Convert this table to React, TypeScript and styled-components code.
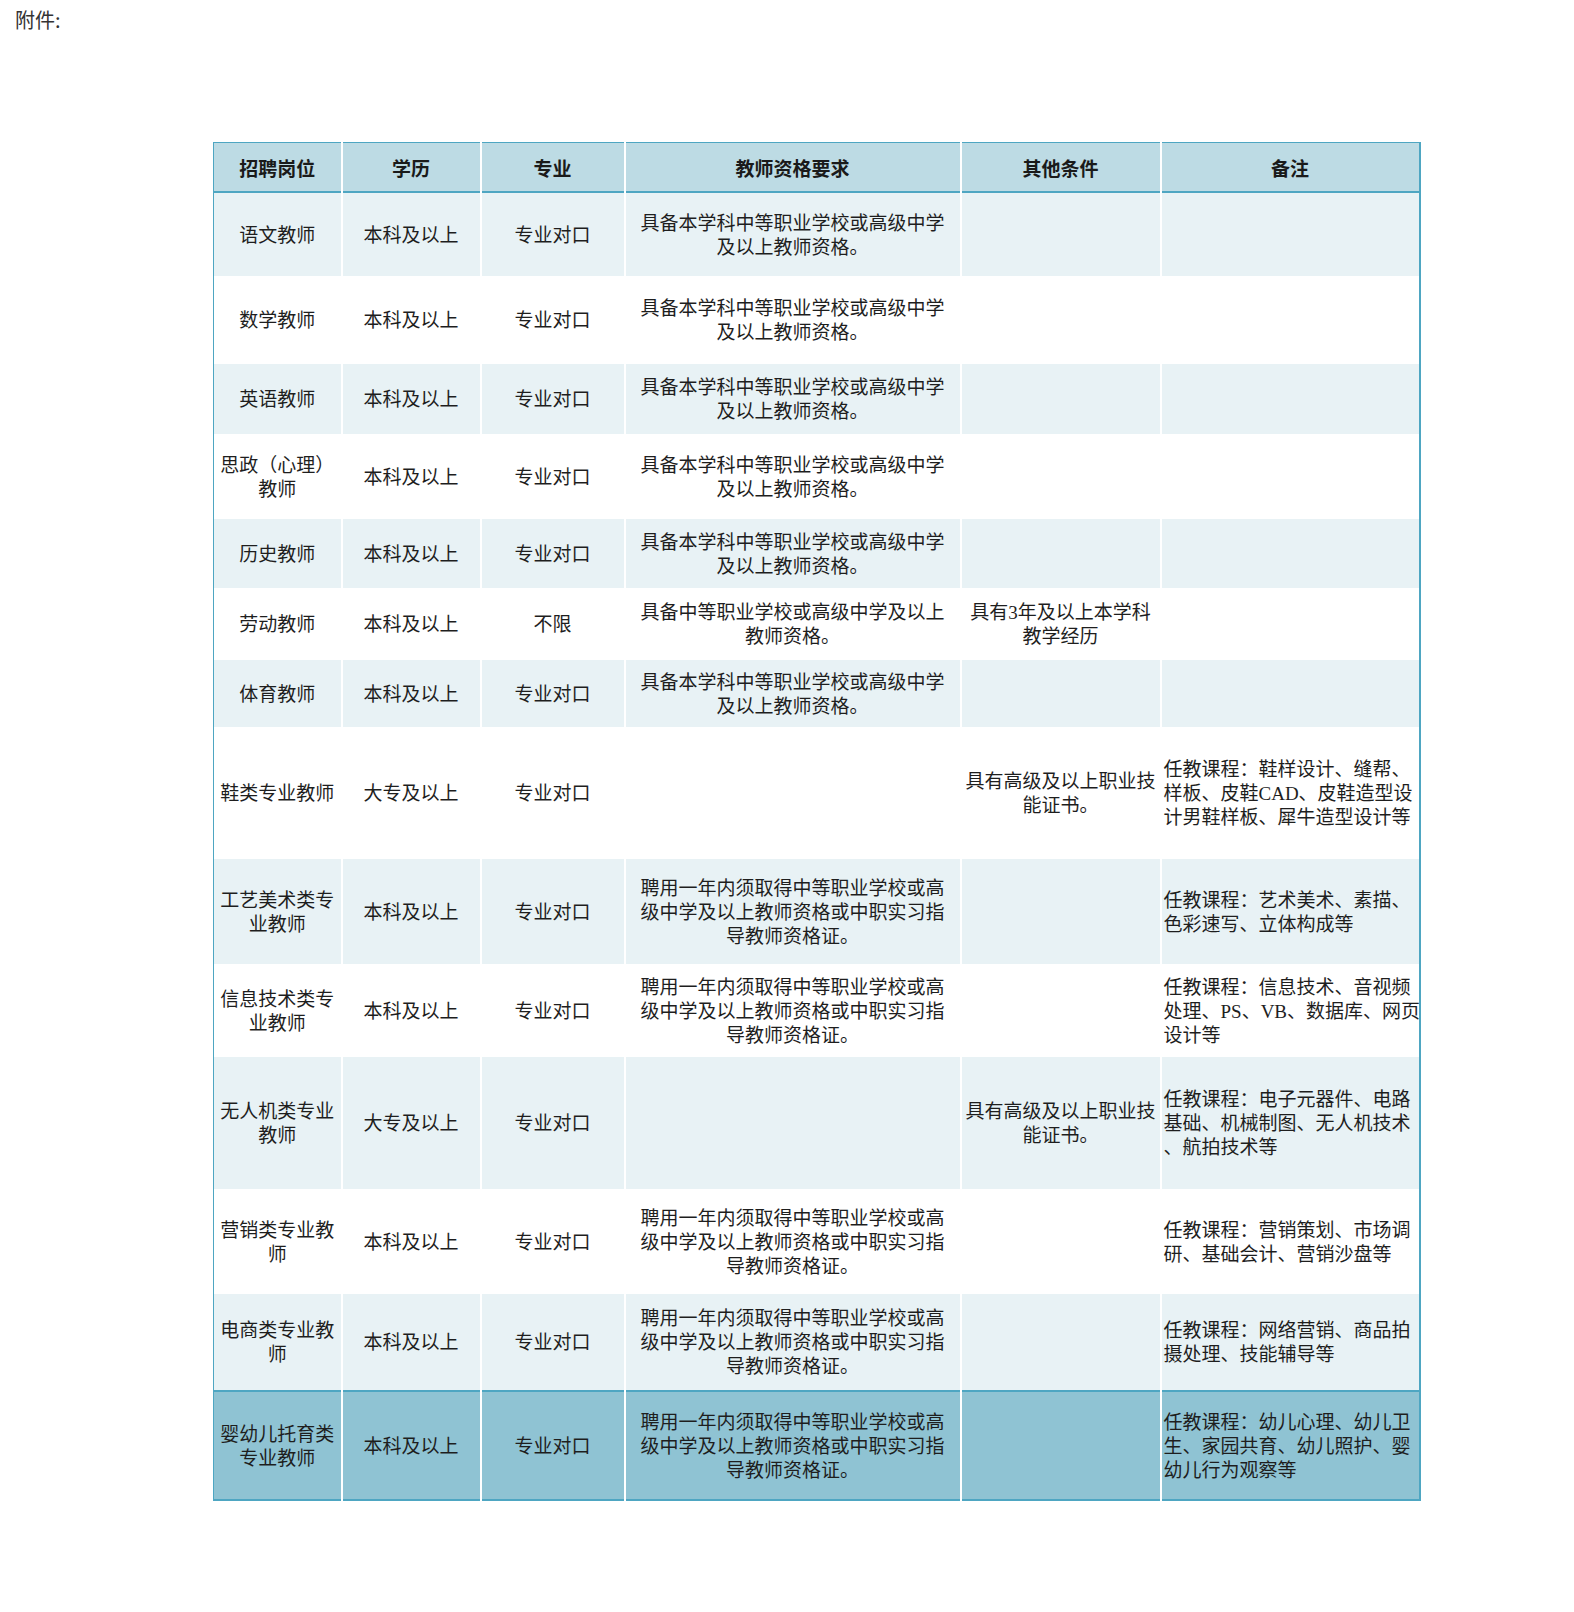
import React from "react";
import styled, { createGlobalStyle } from "styled-components";

const GlobalStyle = createGlobalStyle`
    body {
        margin: 0;
        background: #ffffff;
    }
`;

const Page = styled.div`
    width: 1574px;
    min-height: 1612px;
    padding: 7px 0 0 15px;
    box-sizing: border-box;
`;

const Attachment = styled.div`
    font-family: "Noto Sans CJK SC", "Noto Sans", sans-serif;
    font-size: 20px;
    line-height: 26px;
    color: #333333;
`;

const TableWrap = styled.div`
    margin: 109px 0 0 198px;
`;

const Table = styled.table`
    border-collapse: collapse;
    table-layout: fixed;
    width: 1207px;
    border-top: 1px solid #4ea6c2;
    border-left: 1px solid #4ea6c2;
    border-right: 2px solid #4ea6c2;
    font-family: "Liberation Serif", "Noto Sans CJK SC", serif;
    font-size: 19px;
    line-height: 24px;
    color: #1e1e1e;
`;

type RowKind = "header" | "band" | "plain" | "total";

const rowBg: Record<RowKind, string> = {
    header: "#bddbe4",
    band: "#e8f2f5",
    plain: "#ffffff",
    total: "#8fc3d3",
};

const Row = styled.tr<{ $kind: RowKind; $h: number }>`
    height: ${({ $h }) => $h}px;
    background: ${({ $kind }) => rowBg[$kind]};
    border-bottom: ${({ $kind }) =>
        $kind === "header" || $kind === "total" ? "2px solid #4ea6c2" : "none"};
    border-top: ${({ $kind }) => ($kind === "total" ? "2px solid #4ea6c2" : "none")};
`;

const HeadCell = styled.th`
    padding: 2px 4px 0;
    font-family: "Noto Sans CJK SC", sans-serif;
    font-weight: 700;
    font-size: 19px;
    text-align: center;
    vertical-align: middle;
    border-left: 2px solid #ffffff;
    color: #1a1a1a;

    &:first-child {
        border-left: none;
    }
`;

const Cell = styled.td<{ $align?: "left" | "center" }>`
    padding: ${({ $align }) => ($align === "left" ? "3px 0 0 2px" : "3px 4px 0")};
    text-align: ${({ $align }) => $align || "center"};
    vertical-align: middle;
    white-space: nowrap;
    overflow: visible;
    border-left: 2px solid #ffffff;

    &:first-child {
        border-left: none;
    }
`;

const Line = styled.span`
    display: block;
`;

const widths = [128, 139, 144, 336, 200, 259];
const headers = ["招聘岗位", "学历", "专业", "教师资格要求", "其他条件", "备注"];

const REQ_A = ["具备本学科中等职业学校或高级中学", "及以上教师资格。"];
const REQ_B = ["具备中等职业学校或高级中学及以上", "教师资格。"];
const REQ_C = [
    "聘用一年内须取得中等职业学校或高",
    "级中学及以上教师资格或中职实习指",
    "导教师资格证。",
];
const SKILL = ["具有高级及以上职业技", "能证书。"];

interface RowData {
    post: string[];
    edu: string;
    major: string;
    req: string[];
    other: string[];
    note: string[];
    h: number;
}

const rows: RowData[] = [
    { post: ["语文教师"], edu: "本科及以上", major: "专业对口", req: REQ_A, other: [], note: [], h: 84 },
    { post: ["数学教师"], edu: "本科及以上", major: "专业对口", req: REQ_A, other: [], note: [], h: 88 },
    { post: ["英语教师"], edu: "本科及以上", major: "专业对口", req: REQ_A, other: [], note: [], h: 70 },
    { post: ["思政（心理）", "教师"], edu: "本科及以上", major: "专业对口", req: REQ_A, other: [], note: [], h: 85 },
    { post: ["历史教师"], edu: "本科及以上", major: "专业对口", req: REQ_A, other: [], note: [], h: 69 },
    {
        post: ["劳动教师"], edu: "本科及以上", major: "不限", req: REQ_B,
        other: ["具有3年及以上本学科", "教学经历"], note: [], h: 72,
    },
    { post: ["体育教师"], edu: "本科及以上", major: "专业对口", req: REQ_A, other: [], note: [], h: 67 },
    {
        post: ["鞋类专业教师"], edu: "大专及以上", major: "专业对口", req: [], other: SKILL,
        note: ["任教课程：鞋样设计、缝帮、", "样板、皮鞋CAD、皮鞋造型设", "计男鞋样板、犀牛造型设计等"],
        h: 132,
    },
    {
        post: ["工艺美术类专", "业教师"], edu: "本科及以上", major: "专业对口", req: REQ_C, other: [],
        note: ["任教课程：艺术美术、素描、", "色彩速写、立体构成等"], h: 105,
    },
    {
        post: ["信息技术类专", "业教师"], edu: "本科及以上", major: "专业对口", req: REQ_C, other: [],
        note: ["任教课程：信息技术、音视频", "处理、PS、VB、数据库、网页", "设计等"], h: 93,
    },
    {
        post: ["无人机类专业", "教师"], edu: "大专及以上", major: "专业对口", req: [], other: SKILL,
        note: ["任教课程：电子元器件、电路", "基础、机械制图、无人机技术", "、航拍技术等"], h: 132,
    },
    {
        post: ["营销类专业教", "师"], edu: "本科及以上", major: "专业对口", req: REQ_C, other: [],
        note: ["任教课程：营销策划、市场调", "研、基础会计、营销沙盘等"], h: 105,
    },
    {
        post: ["电商类专业教", "师"], edu: "本科及以上", major: "专业对口", req: REQ_C, other: [],
        note: ["任教课程：网络营销、商品拍", "摄处理、技能辅导等"], h: 97,
    },
    {
        post: ["婴幼儿托育类", "专业教师"], edu: "本科及以上", major: "专业对口", req: REQ_C, other: [],
        note: ["任教课程：幼儿心理、幼儿卫", "生、家园共育、幼儿照护、婴", "幼儿行为观察等"], h: 109,
    },
];

const Lines: React.FC<{ lines: string[] }> = ({ lines }) => (
    <>
        {lines.map((l, i) => (
            <Line key={i}>{l}</Line>
        ))}
    </>
);

const kindFor = (i: number): RowKind => {
    if (i === rows.length - 1) return "total";
    return i % 2 === 0 ? "band" : "plain";
};

const App: React.FC = () => {
    return (
        <>
            <GlobalStyle />
            <Page>
                <Attachment>附件:</Attachment>
                <TableWrap>
                    <Table>
                        <colgroup>
                            {widths.map((w, i) => (
                                <col key={i} style={{ width: w }} />
                            ))}
                        </colgroup>
                        <thead>
                            <Row $kind="header" $h={49}>
                                {headers.map((h) => (
                                    <HeadCell key={h}>{h}</HeadCell>
                                ))}
                            </Row>
                        </thead>
                        <tbody>
                            {rows.map((r, i) => (
                                <Row key={i} $kind={kindFor(i)} $h={r.h}>
                                    <Cell><Lines lines={r.post} /></Cell>
                                    <Cell>{r.edu}</Cell>
                                    <Cell>{r.major}</Cell>
                                    <Cell><Lines lines={r.req} /></Cell>
                                    <Cell><Lines lines={r.other} /></Cell>
                                    <Cell $align="left"><Lines lines={r.note} /></Cell>
                                </Row>
                            ))}
                        </tbody>
                    </Table>
                </TableWrap>
            </Page>
        </>
    );
};

export default App;
